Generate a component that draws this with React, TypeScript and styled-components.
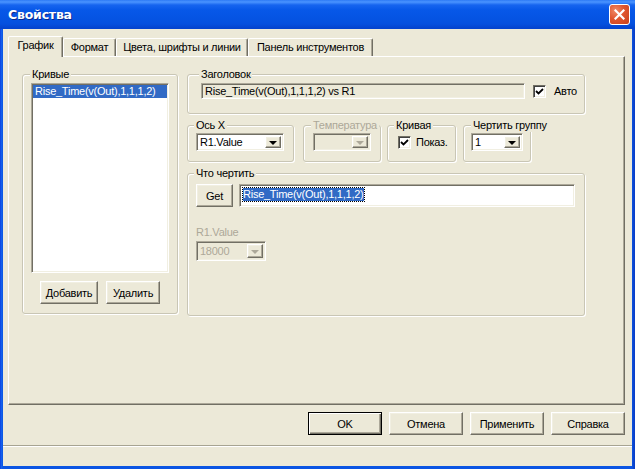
import React from "react";
import styled, { createGlobalStyle, css } from "styled-components";

const FACE = "#ECE9D8";
const SHADOW = "#ACA899";
const DARK = "#716F64";
const LIGHT = "#F1EFE2";
const DISABLED = "#ACA899";

const Global = createGlobalStyle`
  html, body { margin: 0; padding: 0; background: #fff; }
  body { font-family: "Liberation Sans", Arial, sans-serif; font-size: 11px; letter-spacing: -0.25px; color: #000; }
  * { box-sizing: border-box; }
`;

const sunken = css`
  border: 1px solid;
  border-color: ${SHADOW} #fff #fff ${SHADOW};
  box-shadow: inset 1px 1px 0 ${DARK}, inset -1px -1px 0 ${LIGHT};
`;

const raised = css`
  border: 1px solid;
  border-color: #fff ${DARK} ${DARK} #fff;
  box-shadow: inset -1px -1px 0 ${SHADOW}, inset 1px 1px 0 ${LIGHT};
`;

const Window = styled.div`
  width: 635px;
  height: 469px;
  display: flex;
  flex-direction: column;
  background: linear-gradient(90deg, #0831d9 0, #1663ee 1px, #0b55e3 3px, #0b55e3 632px, #0a3fc8 634px);
`;

const TitleBar = styled.div`
  height: 29px;
  flex: none;
  display: flex;
  align-items: center;
  justify-content: space-between;
  padding: 0 5px 0 8px;
  background: linear-gradient(
    180deg,
    #2d7af5 0,
    #4a94ff 2px,
    #1664ef 5px,
    #0758e8 10px,
    #0554e3 18px,
    #0550de 24px,
    #0444cf 28px,
    #0444cf 29px
  );
`;

const Title = styled.span`
  color: #fff;
  font-family: "DejaVu Sans", "Liberation Sans", sans-serif;
  font-weight: bold;
  font-size: 12.5px;
  letter-spacing: -0.2px;
  text-shadow: 1px 1px 0 #0a2a90;
`;

const CloseButton = styled.div`
  width: 21px;
  height: 21px;
  border: 1px solid #fff;
  border-radius: 3px;
  background: radial-gradient(circle at 30% 30%, #f08a67 0, #e0562f 45%, #c8401b 100%);
  display: flex;
  align-items: center;
  justify-content: center;
`;

const Client = styled.div`
  flex: 1;
  margin: 0 3px 3px 3px;
  background: ${FACE};
  display: flex;
  flex-direction: column;
`;

const TabStrip = styled.div`
  height: 20px;
  margin: 7px 7px 0 5px;
  display: flex;
  align-items: flex-end;
  position: relative;
  z-index: 1;
`;

const Tab = styled.div<{ $w: number; $active?: boolean }>`
  width: ${(p) => p.$w}px;
  height: ${(p) => (p.$active ? 21 : 18)}px;
  margin-bottom: ${(p) => (p.$active ? -1 : 0)}px;
  background: ${FACE};
  border: 1px solid;
  border-bottom: none;
  border-color: #fff ${DARK} transparent #fff;
  box-shadow: inset -1px 0 0 ${SHADOW};
  border-radius: 2px 2px 0 0;
  text-align: center;
  line-height: ${(p) => (p.$active ? 17 : 16)}px;
  white-space: nowrap;
`;

const TabPanel = styled.div`
  height: 349px;
  margin: 0 7px 0 5px;
  border: 1px solid;
  border-color: #fff ${DARK} ${DARK} #fff;
  box-shadow: inset -1px -1px 0 ${SHADOW};
  display: grid;
  grid-template-columns: 156px 398px;
  column-gap: 9px;
  align-items: start;
  padding: 17px 0 0 13px;
`;

const GroupBox = styled.div<{ $w?: number; $h?: number; $pl?: number }>`
  ${(p) => (p.$w ? `width: ${p.$w}px;` : "")}
  ${(p) => (p.$h ? `height: ${p.$h}px;` : "")}
  border: 1px solid #c9c6b5;
  border-radius: 3px;
  box-shadow: inset 1px 1px 0 #fff, 1px 1px 0 #fff;
  display: flex;
  flex-direction: column;
  align-items: flex-start;
  padding: 0 0 0 ${(p) => p.$pl ?? 8}px;
  flex: none;
`;

/* $ml is the offset of the caption from the group's content edge */
const Caption = styled.span<{ $disabled?: boolean; $ml: number }>`
  margin: -7px 0 0 ${(p) => p.$ml}px;
  padding: 0 2px;
  line-height: 13px;
  height: 13px;
  white-space: nowrap;
  background: ${FACE};
  color: ${(p) => (p.$disabled ? DISABLED : "#000")};
`;

const ListBox = styled.div`
  width: 138px;
  height: 190px;
  margin-top: 2px;
  background: #fff;
  ${sunken};
  padding: 1px;
`;

const ListItem = styled.div<{ $selected?: boolean }>`
  height: 13px;
  line-height: 13px;
  padding-left: 2px;
  background: ${(p) => (p.$selected ? "#316AC5" : "transparent")};
  color: ${(p) => (p.$selected ? "#fff" : "#000")};
  white-space: nowrap;
`;

const ButtonRow = styled.div<{ $gap: number; $mt?: number; $pr?: number; $pl?: number }>`
  display: flex;
  justify-content: ${(p) => (p.$pr !== undefined ? "flex-end" : "flex-start")};
  gap: ${(p) => p.$gap}px;
  margin-top: ${(p) => p.$mt ?? 0}px;
  padding-right: ${(p) => p.$pr ?? 0}px;
  padding-left: ${(p) => p.$pl ?? 0}px;
  align-self: stretch;
`;

const Button = styled.div<{ $w: number; $h?: number; $default?: boolean }>`
  width: ${(p) => p.$w}px;
  height: ${(p) => p.$h ?? 23}px;
  background: ${FACE};
  display: flex;
  align-items: center;
  justify-content: center;
  white-space: nowrap;
  ${(p) =>
    p.$default
      ? css`
          border: 1px solid #000;
          box-shadow: inset 1px 1px 0 #fff, inset -1px -1px 0 ${DARK}, inset -2px -2px 0 ${SHADOW};
        `
      : raised}
`;

const RightColumn = styled.div`
  display: flex;
  flex-direction: column;
  gap: 11px;
`;

const Row = styled.div<{ $gap: number; $mt?: number }>`
  display: flex;
  align-items: center;
  gap: ${(p) => p.$gap}px;
  margin-top: ${(p) => p.$mt ?? 0}px;
`;

const GroupRow = styled.div`
  display: flex;
  align-items: flex-start;
`;

const Edit = styled.div<{ $w: number; $h: number; $readonly?: boolean }>`
  width: ${(p) => p.$w}px;
  height: ${(p) => p.$h}px;
  background: ${(p) => (p.$readonly ? FACE : "#fff")};
  ${sunken};
  padding: 0 3px;
  display: flex;
  align-items: ${(p) => (p.$readonly ? "center" : "flex-start")};
  padding-top: ${(p) => (p.$readonly ? 0 : 3)}px;
  white-space: nowrap;
  overflow: hidden;
`;

const Highlight = styled.span`
  background: #316ac5;
  color: #fff;
  line-height: 13px;
  outline: 1px dotted #000;
`;

const Combo = styled.div<{ $w: number; $h: number; $disabled?: boolean }>`
  width: ${(p) => p.$w}px;
  height: ${(p) => p.$h}px;
  background: ${(p) => (p.$disabled ? FACE : "#fff")};
  ${sunken};
  padding: 2px;
  display: flex;
  align-items: stretch;
`;

const ComboText = styled.span<{ $disabled?: boolean }>`
  flex: 1;
  padding-left: 1px;
  display: flex;
  align-items: center;
  color: ${(p) => (p.$disabled ? DISABLED : "#000")};
  white-space: nowrap;
`;

const ComboArrow = styled.div<{ $disabled?: boolean }>`
  width: 16px;
  flex: none;
  background: ${FACE};
  ${raised};
  display: flex;
  align-items: center;
  justify-content: center;
  &::after {
    content: "";
    border-left: 4px solid transparent;
    border-right: 4px solid transparent;
    border-top: 4px solid ${(p) => (p.$disabled ? DISABLED : "#000")};
    margin-top: 1px;
  }
`;

const CheckRow = styled.div<{ $mt?: number }>`
  display: flex;
  align-items: center;
  gap: 5px;
  margin-top: ${(p) => p.$mt ?? 0}px;
  height: 18px;
`;

const CheckBox = styled.div`
  width: 13px;
  height: 13px;
  background: #fff;
  border: 1px solid;
  border-color: ${DARK} #fff #fff ${DARK};
  box-shadow: inset 1px 1px 0 #404040, inset -1px -1px 0 ${LIGHT};
  display: flex;
  align-items: center;
  justify-content: center;
`;

const Label = styled.span<{ $disabled?: boolean; $mt?: number }>`
  line-height: 13px;
  color: ${(p) => (p.$disabled ? DISABLED : "#000")};
  margin-top: ${(p) => p.$mt ?? 0}px;
  white-space: nowrap;
`;

const StatusBar = styled.div`
  flex: 1;
  margin-top: 10px;
  border-top: 1px solid #a7a492;
  box-shadow: inset 0 1px 0 #fff;
`;

const Check = () => (
  <svg width="9" height="9" viewBox="0 0 9 9">
    <path d="M1 4 L3.5 6.5 L8 2" stroke="#000" strokeWidth="1.8" fill="none" />
  </svg>
);

const CloseX = () => (
  <svg width="11" height="11" viewBox="0 0 11 11">
    <path d="M1.5 1.5 L9.5 9.5 M9.5 1.5 L1.5 9.5" stroke="#fff" strokeWidth="2.2" strokeLinecap="square" />
  </svg>
);

export default function App() {
  return (
    <>
      <Global />
      <Window>
        <TitleBar>
          <Title>Свойства</Title>
          <CloseButton>
            <CloseX />
          </CloseButton>
        </TitleBar>
        <Client>
          <TabStrip>
            <Tab $w={55} $active>График</Tab>
            <Tab $w={53}>Формат</Tab>
            <Tab $w={132}>Цвета, шрифты и линии</Tab>
            <Tab $w={125}>Панель инструментов</Tab>
          </TabStrip>
          <TabPanel>
            <GroupBox $h={240} $pl={8}>
              <Caption $ml={-1}>Кривые</Caption>
              <ListBox>
                <ListItem $selected>Rise_Time(v(Out),1,1,1,2)</ListItem>
              </ListBox>
              <ButtonRow $gap={8} $mt={8} $pl={9}>
                <Button $w={58}>Добавить</Button>
                <Button $w={54}>Удалить</Button>
              </ButtonRow>
            </GroupBox>
            <RightColumn>
              <GroupBox $h={40} $pl={13}>
                <Caption $ml={-2}>Заголовок</Caption>
                <Row $gap={8} $mt={2}>
                  <Edit $w={324} $h={16} $readonly>Rise_Time(v(Out),1,1,1,2) vs R1</Edit>
                  <CheckBox>
                    <Check />
                  </CheckBox>
                  <Label>Авто</Label>
                </Row>
              </GroupBox>
              <GroupRow>
                <GroupBox $w={107} $h={37} $pl={8}>
                  <Caption $ml={-2}>Ось X</Caption>
                  <Combo $w={88} $h={18} style={{ marginTop: 1 }}>
                    <ComboText>R1.Value</ComboText>
                    <ComboArrow />
                  </Combo>
                </GroupBox>
                <GroupBox $w={78} $h={37} $pl={9} style={{ marginLeft: 9 }}>
                  <Caption $ml={-2} $disabled>Температура</Caption>
                  <Combo $w={58} $h={18} $disabled style={{ marginTop: 1 }}>
                    <ComboText $disabled />
                    <ComboArrow $disabled />
                  </Combo>
                </GroupBox>
                <GroupBox $w={69} $h={37} $pl={10} style={{ marginLeft: 6 }}>
                  <Caption $ml={-4}>Кривая</Caption>
                  <CheckRow $mt={1}>
                    <CheckBox>
                      <Check />
                    </CheckBox>
                    <Label>Показ.</Label>
                  </CheckRow>
                </GroupBox>
                <GroupBox $w={68} $h={37} $pl={7} style={{ marginLeft: 7 }}>
                  <Caption $ml={0}>Чертить группу</Caption>
                  <Combo $w={52} $h={18} style={{ marginTop: 1 }}>
                    <ComboText>1</ComboText>
                    <ComboArrow />
                  </Combo>
                </GroupBox>
              </GroupRow>
              <GroupBox $h={143} $pl={8}>
                <Caption $ml={-2}>Что чертить</Caption>
                <Row $gap={6} $mt={4}>
                  <Button $w={37}>Get</Button>
                  <Edit $w={336} $h={23}>
                    <Highlight>Rise_Time(v(Out),1,1,1,2)</Highlight>
                  </Edit>
                </Row>
                <Label $disabled $mt={19}>R1.Value</Label>
                <Combo $w={70} $h={20} $disabled style={{ marginTop: 2 }}>
                  <ComboText $disabled>18000</ComboText>
                  <ComboArrow $disabled />
                </Combo>
              </GroupBox>
            </RightColumn>
          </TabPanel>
          <ButtonRow $gap={7} $mt={7} $pr={7}>
            <Button $w={74} $default>OK</Button>
            <Button $w={74}>Отмена</Button>
            <Button $w={74}>Применить</Button>
            <Button $w={74}>Справка</Button>
          </ButtonRow>
          <StatusBar />
        </Client>
      </Window>
    </>
  );
}
